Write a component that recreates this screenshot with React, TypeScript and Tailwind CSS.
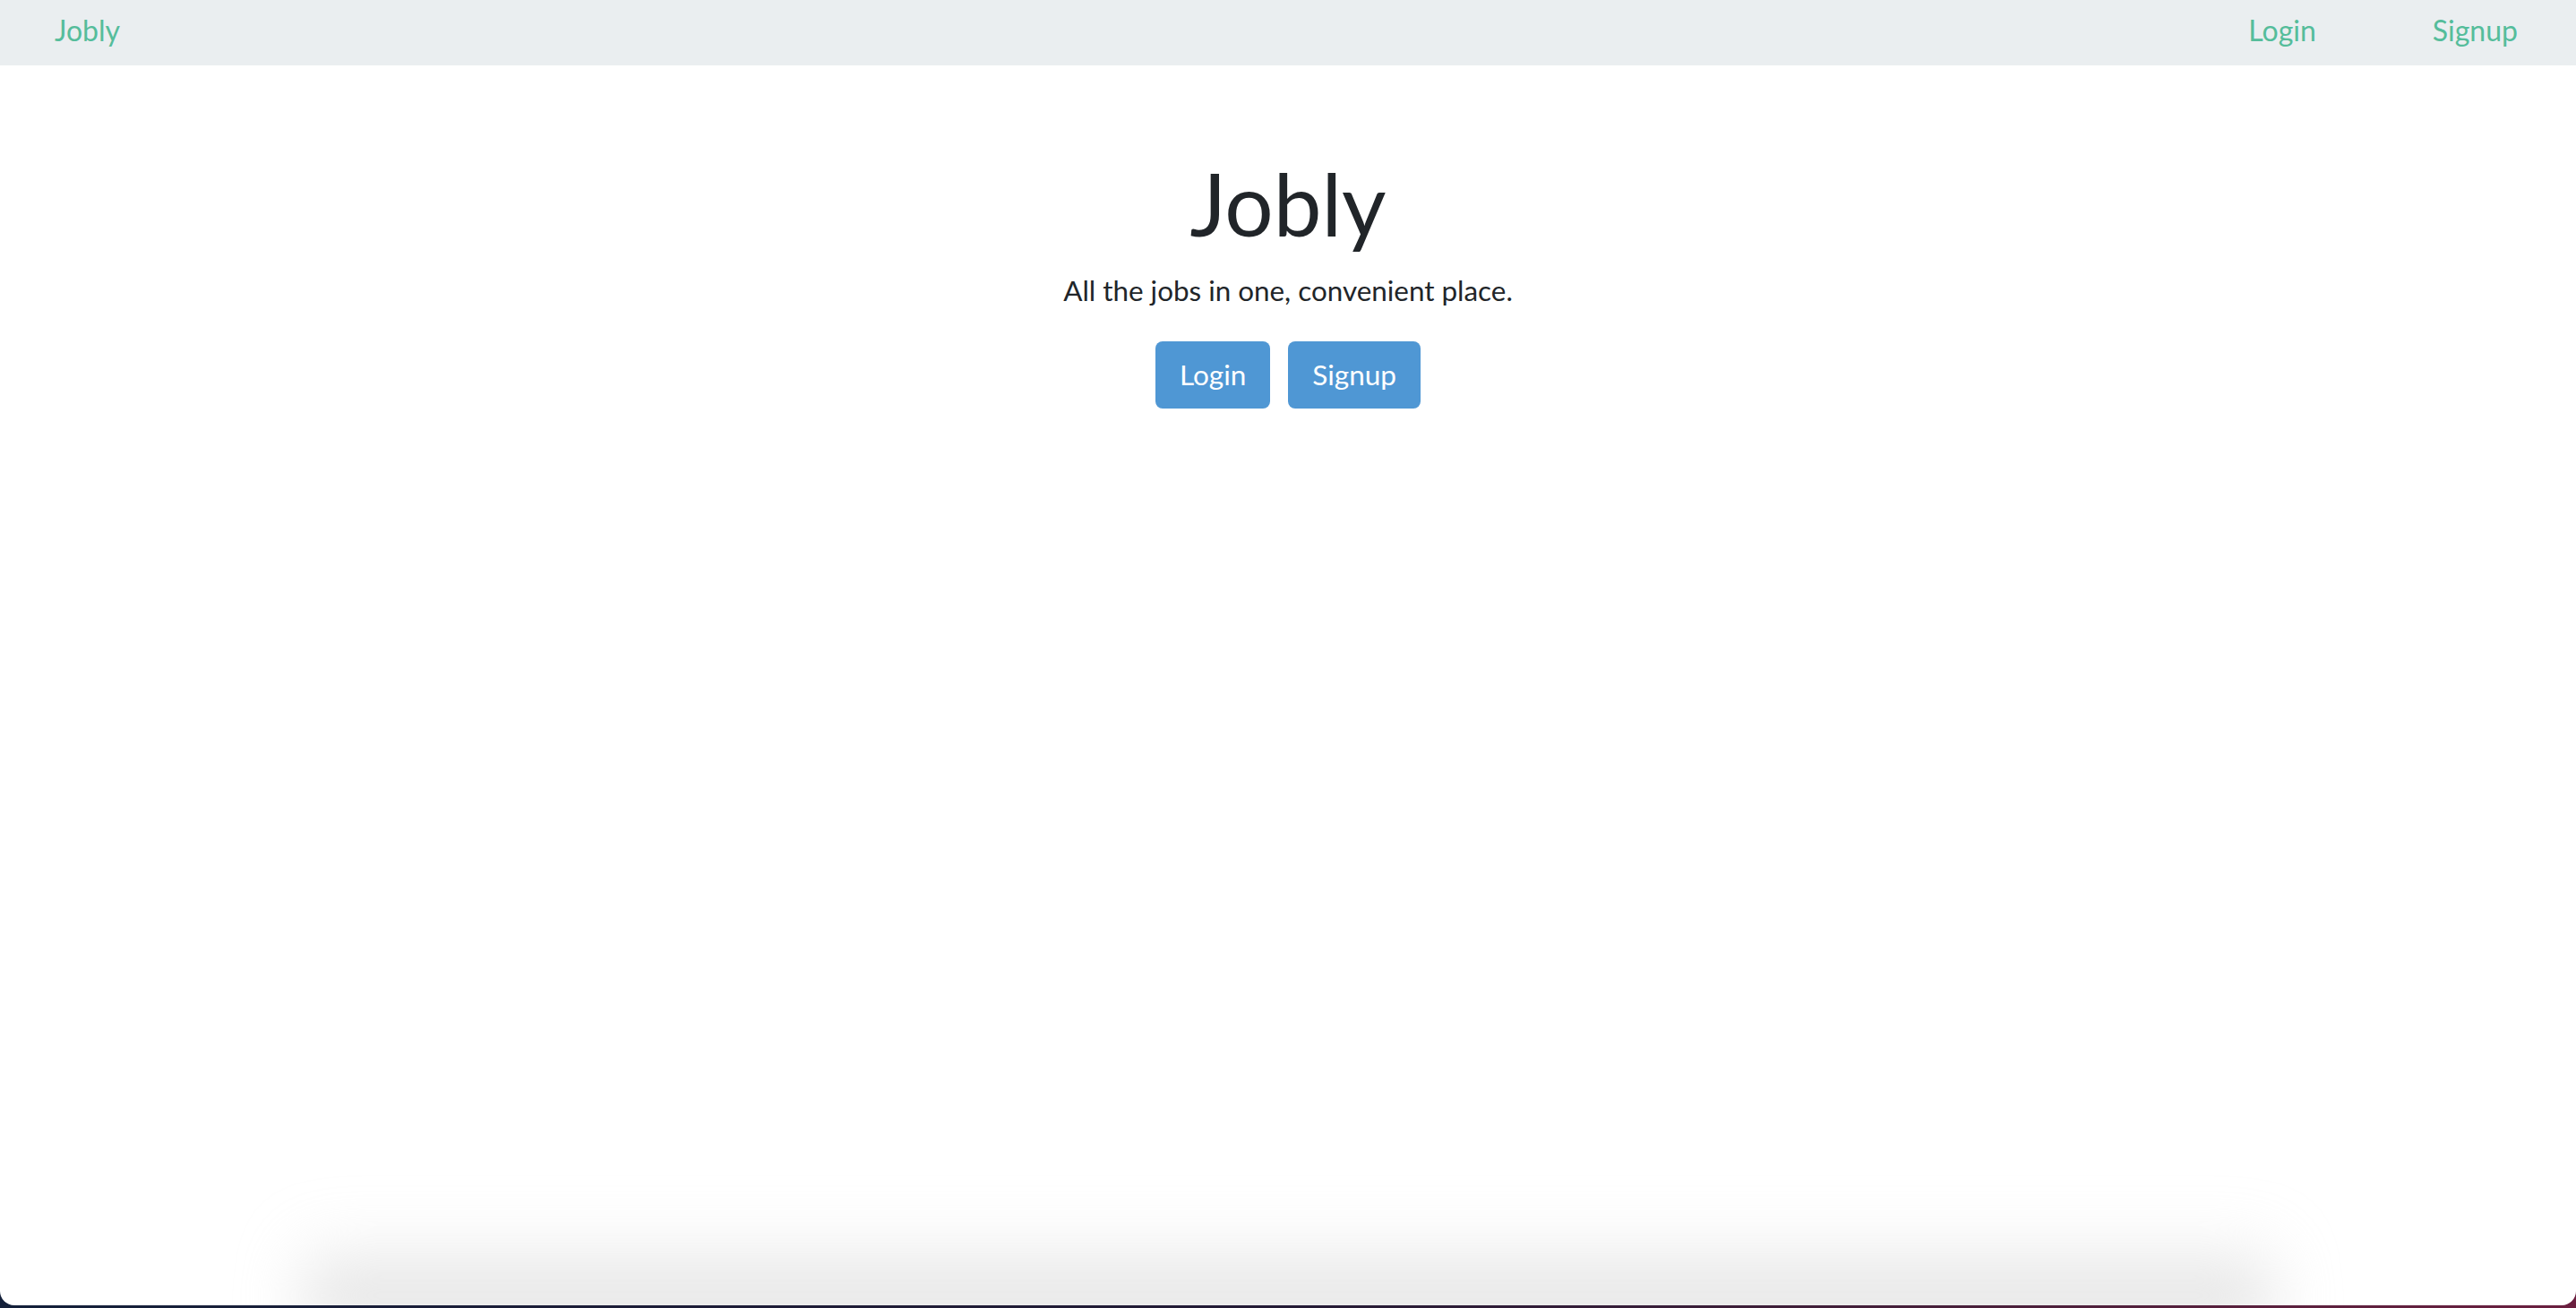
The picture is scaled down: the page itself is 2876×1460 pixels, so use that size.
export default function App() {
  return (
    <div
      className="h-[1460px] w-full overflow-hidden bg-gradient-to-r from-[#14203a] via-[#241b36] to-[#6b1f3f]"
      style={{ fontFamily: 'Lato, "Open Sans", sans-serif' }}
    >
      <div className="relative flex h-[1457px] flex-col overflow-hidden rounded-b-[16px] bg-white">
        {/* Navbar */}
        <nav className="flex h-[73px] shrink-0 items-center justify-between bg-[#eaeef0] pb-[6px] pl-[61px] pr-[65px]">
          <a className="text-[32px] leading-none text-[#55bd9b]">Jobly</a>
          <div className="flex items-center gap-[130px]">
            <a className="text-[32px] leading-none text-[#55bd9b]">Login</a>
            <a className="text-[32px] leading-none text-[#55bd9b]">Signup</a>
          </div>
        </nav>

        {/* Hero */}
        <main className="flex flex-col items-center text-center">
          <h1 className="mt-[96px] text-[96px] leading-[1.2] text-[#212529]">Jobly</h1>
          <p className="mt-[17px] text-[31.4px] leading-[1.5] text-[#212529]">
            All the jobs in one, convenient place.
          </p>
          <div className="mt-[33px] flex gap-[20px]">
            <button className="flex h-[75px] items-center rounded-[8px] bg-[#4f97d4] px-[27px] text-[31.5px] leading-none text-white">
              Login
            </button>
            <button className="flex h-[75px] items-center rounded-[8px] bg-[#4f97d4] px-[27px] text-[31.5px] leading-none text-white">
              Signup
            </button>
          </div>
        </main>

        {/* dock shadow */}
        <div className="pointer-events-none absolute bottom-[-20px] left-[340px] right-[340px] h-[100px] bg-gradient-to-t from-[#d6d6d6] to-white/0 blur-[35px]" />
      </div>
    </div>
  )
}
